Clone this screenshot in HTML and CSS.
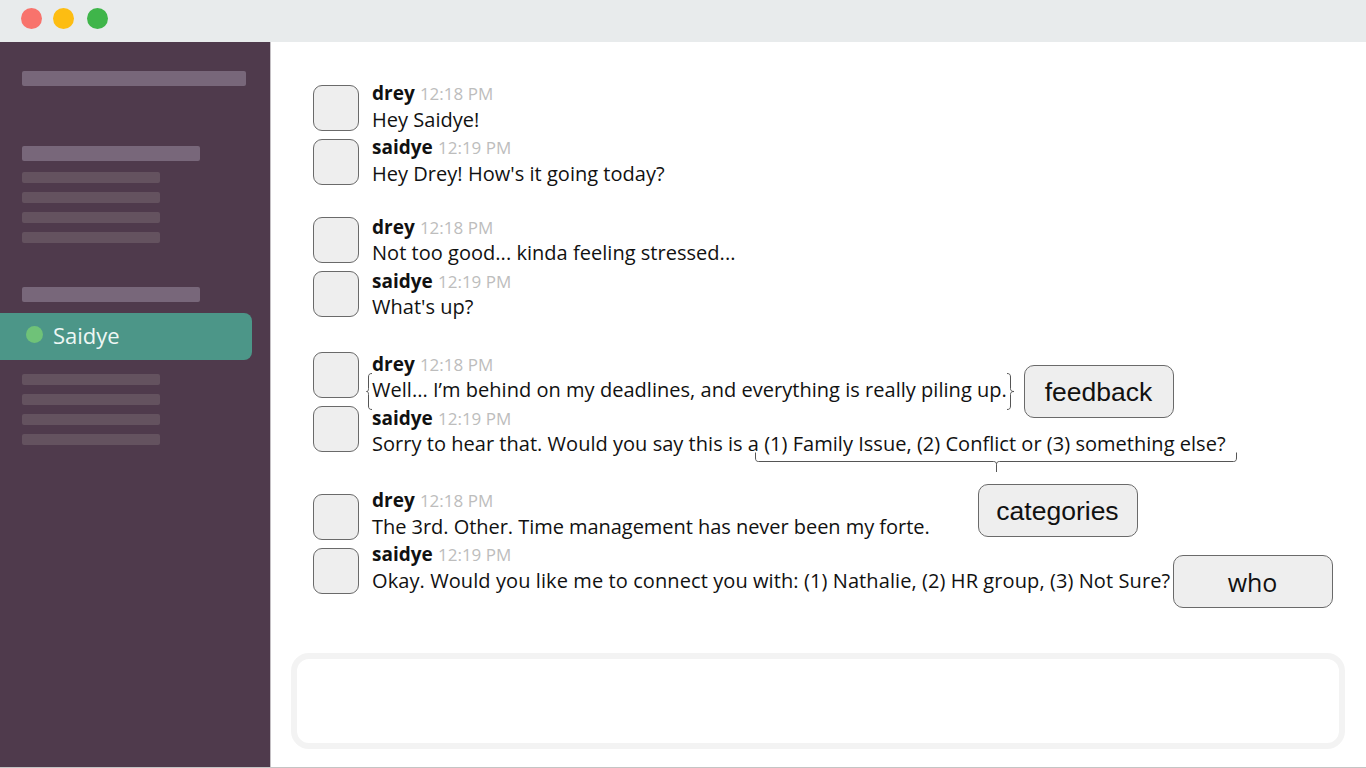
FILE: index.html
```html
<!DOCTYPE html>
<html lang="en">
<head>
    <meta charset="UTF-8">
    <meta name="viewport" content="width=device-width, initial-scale=1.0">
    <title>Chat</title>
    <link rel="stylesheet" href="styles.css">
</head>
<body>
    <div class="window">
        <header class="titlebar">
            <span class="light light-red"></span>
            <span class="light light-yellow"></span>
            <span class="light light-green"></span>
        </header>

        <div class="app">
            <aside class="sidebar">
                <div class="bar bar-wide"></div>

                <div class="bar bar-head section-first"></div>
                <div class="bar-list">
                    <div class="bar bar-small"></div>
                    <div class="bar bar-small"></div>
                    <div class="bar bar-small"></div>
                    <div class="bar bar-small"></div>
                </div>

                <div class="bar bar-head section-second"></div>
                <div class="channel">
                    <span class="channel-dot"></span>
                    <span>Saidye</span>
                </div>
                <div class="bar-list bar-list-after">
                    <div class="bar bar-small"></div>
                    <div class="bar bar-small"></div>
                    <div class="bar bar-small"></div>
                    <div class="bar bar-small"></div>
                </div>
            </aside>

            <main class="chat">
                <section class="group group-1">
                    <div class="msg">
                        <div class="avatar"></div>
                        <div class="msg-body">
                            <div class="msg-head"><b>drey</b> <span class="time">12:18 PM</span></div>
                            <div class="msg-text">Hey Saidye!</div>
                        </div>
                    </div>
                    <div class="msg">
                        <div class="avatar"></div>
                        <div class="msg-body">
                            <div class="msg-head"><b>saidye</b> <span class="time">12:19 PM</span></div>
                            <div class="msg-text">Hey Drey! How's it going today?</div>
                        </div>
                    </div>
                </section>

                <section class="group group-2">
                    <div class="msg">
                        <div class="avatar"></div>
                        <div class="msg-body">
                            <div class="msg-head"><b>drey</b> <span class="time">12:18 PM</span></div>
                            <div class="msg-text">Not too good... kinda feeling stressed...</div>
                        </div>
                    </div>
                    <div class="msg">
                        <div class="avatar"></div>
                        <div class="msg-body">
                            <div class="msg-head"><b>saidye</b> <span class="time">12:19 PM</span></div>
                            <div class="msg-text">What's up?</div>
                        </div>
                    </div>
                </section>

                <section class="group group-3">
                    <div class="msg">
                        <div class="avatar"></div>
                        <div class="msg-body">
                            <div class="msg-head"><b>drey</b> <span class="time">12:18 PM</span></div>
                            <div class="msg-text">Well... I’m behind on my deadlines, and everything is really piling up.</div>
                        </div>
                    </div>
                    <div class="msg">
                        <div class="avatar"></div>
                        <div class="msg-body">
                            <div class="msg-head"><b>saidye</b> <span class="time">12:19 PM</span></div>
                            <div class="msg-text">Sorry to hear that. Would you say this is a (1) Family Issue, (2) Conflict or (3) something else?</div>
                        </div>
                    </div>
                </section>

                <section class="group group-4">
                    <div class="msg">
                        <div class="avatar"></div>
                        <div class="msg-body">
                            <div class="msg-head"><b>drey</b> <span class="time">12:18 PM</span></div>
                            <div class="msg-text msg-text-tight">The 3rd. Other. Time management has never been my forte.</div>
                        </div>
                    </div>
                    <div class="msg">
                        <div class="avatar"></div>
                        <div class="msg-body">
                            <div class="msg-head"><b>saidye</b> <span class="time">12:19 PM</span></div>
                            <div class="msg-text msg-text-long">Okay. Would you like me to connect you with: (1) Nathalie, (2) HR group, (3) Not Sure?</div>
                        </div>
                    </div>
                </section>

                <div class="composer"></div>

                <!-- annotations drawn over the chat -->
                <svg class="brace brace-left" width="8" height="37" viewBox="0 0 8 37">
                    <path d="M6 .5C3.500 .5 2.500 1.500 2.500 4V15.500C2.500 17.500 2 18.500 .5 18.500 2 18.500 2.500 19.500 2.500 21.500V33C2.500 35.500 3.500 36.500 6 36.500" />
                </svg>
                <svg class="brace brace-right" width="9" height="37" viewBox="0 0 9 37">
                    <path d="M1 .5C3.500 .5 4.500 1.500 4.500 4V15.500C4.500 17.500 5.500 18.500 8 18.500 5.500 18.500 4.500 19.500 4.500 21.500V33C4.500 35.500 3.500 36.500 1 36.500" />
                </svg>
                <svg class="brace brace-under" width="482" height="21" viewBox="0 0 482 21">
                    <path d="M.5 .5V6C.5 8.500 1.500 9.500 3.500 9.500H238.500C240.500 9.500 241.500 10.500 241.500 12.500V20M241.500 12.500C241.500 10.500 242.500 9.500 244.500 9.500H478.500C480.500 9.500 481.500 8.500 481.500 6V.5" />
                </svg>

                <div class="tag tag-feedback">feedback</div>
                <div class="tag tag-categories">categories</div>
                <div class="tag tag-who">who</div>
            </main>
        </div>
    </div>
</body>
</html>
```

FILE: styles.css
```css
:root {
    --sidebar-bg: #4f3a4c;
    --bar-light: #78677a;
    --bar-dim: #64525f;
    --tag-bg: #eeeeee;
    --tag-border: #6a6a6a;
    --time-color: #bdbdbd;
}

* {
    box-sizing: border-box;
    margin: 0;
    padding: 0;
}

html, body {
    height: 100%;
    overflow: hidden;
}

body {
    font-family: 'Open Sans', 'Noto Sans', sans-serif;
    background-color: white;
    color: #111;
}

.window {
    height: 768px;
    display: flex;
    flex-direction: column;
    border-bottom: 1px solid #c4c4c4;
}

.titlebar {
    height: 42px;
    flex: none;
    display: flex;
    align-items: center;
    padding: 0 0 6px 21px;
    background-color: #e8ebec;
}

.light {
    width: 21px;
    height: 21px;
    border-radius: 50%;
}

.light-red {
    background-color: #f8736c;
}

.light-yellow {
    margin-left: 11px;
    background-color: #fdbd12;
}

.light-green {
    margin-left: 13px;
    background-color: #3fb54a;
}

.app {
    flex: 1;
    display: flex;
    min-height: 0;
}

.sidebar {
    width: 271px;
    flex: none;
    padding-top: 29px;
    background-color: var(--sidebar-bg);
    border-right: 1px solid #c4c0c4;
}

.bar {
    margin-left: 22px;
    border-radius: 2px;
}

.bar-wide {
    width: 224px;
    height: 15px;
    background-color: var(--bar-light);
}

.bar-head {
    width: 178px;
    height: 15px;
    background-color: var(--bar-light);
}

.section-first {
    margin-top: 60px;
}

.section-second {
    margin-top: 44px;
}

.bar-list {
    margin-top: 11px;
    display: flex;
    flex-direction: column;
    gap: 9px;
}

.bar-list-after {
    margin-top: 14px;
}

.bar-small {
    width: 138px;
    height: 11px;
    background-color: var(--bar-dim);
}

.channel {
    width: 252px;
    height: 47px;
    margin-top: 11px;
    padding: 0 0 4px 26px;
    display: flex;
    align-items: center;
    gap: 10px;
    font-size: 22px;
    color: #eef7f4;
    background-color: #4c9688;
    border-radius: 0 8px 8px 0;
}

.channel-dot {
    width: 17px;
    height: 17px;
    border-radius: 50%;
    background-color: #6fc278;
}

.chat {
    flex: 1;
    position: relative;
    padding-top: 42.500px;
}

.group-2 {
    margin-top: 24px;
}

.group-3 {
    margin-top: 27.500px;
}

.group-4 {
    margin-top: 33.500px;
}

.msg {
    height: 54px;
    padding-left: 42px;
    display: flex;
    gap: 13px;
}

.avatar {
    width: 46px;
    height: 46px;
    flex: none;
    background-color: var(--tag-bg);
    border: 1.500px solid var(--tag-border);
    border-radius: 9px;
}

.msg-body {
    margin-top: -3.500px;
    white-space: nowrap;
    font-size: 20px;
    line-height: 27px;
}

.group-1 .msg-body {
    margin-top: -5.500px;
}

.group-3 .msg-body {
    margin-top: -2px;
}

.group-4 .msg-body {
    margin-top: -7.500px;
}

.msg-head {
    height: 26px;
}

.group-1 .msg-head,
.group-4 .msg-head {
    height: 27px;
}

.msg-head b {
    font-size: 19px;
    font-weight: 700;
}

.msg-text {
    letter-spacing: 0.03px;
}

.msg-text-long {
    letter-spacing: 0.09px;
}

.msg-text-tight {
    letter-spacing: -0.04px;
}

.time {
    font-size: 17px;
    color: var(--time-color);
}

.composer {
    position: absolute;
    left: 20px;
    top: 611px;
    width: 1054px;
    height: 96px;
    border: 6px solid #f3f3f3;
    border-radius: 18px;
}

.brace {
    position: absolute;
    fill: none;
    stroke: #555;
    stroke-width: 1;
}

.brace-left {
    left: 95px;
    top: 331px;
}

.brace-right {
    left: 735px;
    top: 331px;
}

.brace-under {
    left: 484px;
    top: 410px;
}

.tag {
    position: absolute;
    display: flex;
    align-items: center;
    justify-content: center;
    height: 53px;
    padding-top: 2px;
    font-family: 'Liberation Sans', Arial, sans-serif;
    font-size: 26.500px;
    background-color: var(--tag-bg);
    border: 1.500px solid var(--tag-border);
    border-radius: 10px;
}

.tag-feedback {
    left: 752.500px;
    top: 323px;
    width: 150px;
}

.tag-categories {
    left: 706.500px;
    top: 441.500px;
    width: 160px;
}

.tag-who {
    left: 901.500px;
    top: 512.500px;
    width: 160px;
    padding: 1px 0 0;
    font-family: 'Open Sans', sans-serif;
    font-size: 25px;
}
```
